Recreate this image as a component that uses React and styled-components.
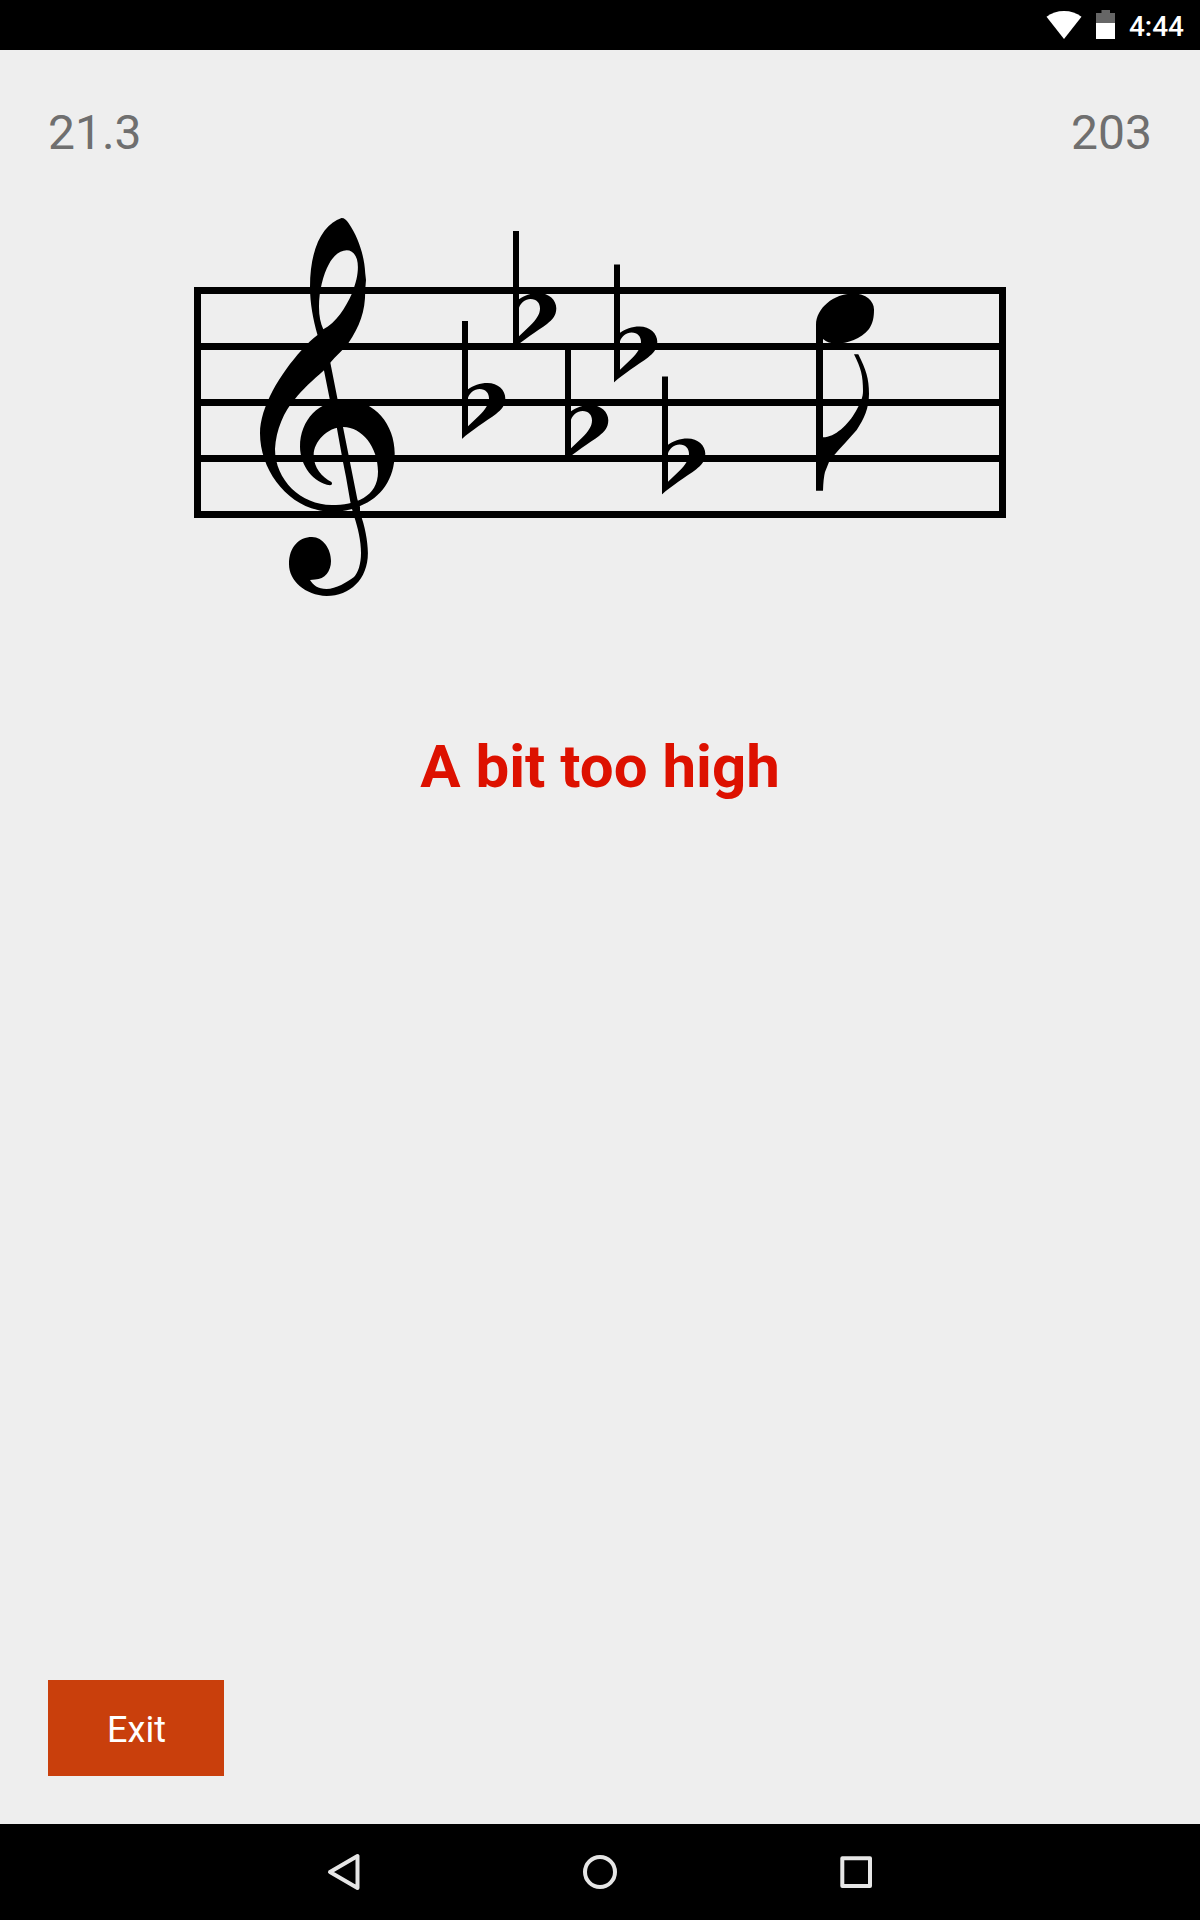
import React from 'react';
import styled, { createGlobalStyle } from 'styled-components';

const GlobalStyle = createGlobalStyle`
  body {
    margin: 0;
    background: #eeeeee;
  }
`

const Screen = styled.div`
  width: 1200px;
  height: 1920px;
  display: flex;
  flex-direction: column;
  background: #eeeeee;
  font-family: Roboto, sans-serif;
`

const StatusBar = styled.header`
  height: 50px;
  box-sizing: border-box;
  padding-right: 16px;
  display: flex;
  flex-shrink: 0;
  align-items: center;
  justify-content: flex-end;
  background: #000;
`

const StatusIcons = styled.svg`
  width: 70px;
  height: 50px;
  margin-right: 13px;
`

const Clock = styled.span`
  color: #fff;
  font-size: 28px;
  font-weight: 500;
  line-height: 32px;
  padding-top: 4px;
`

const Main = styled.main`
  flex: 1;
  display: flex;
  flex-direction: column;
  padding: 55px 48px 48px;
`

const Counters = styled.div`
  display: flex;
  justify-content: space-between;
  height: 56px;
`

const Counter = styled.span`
  color: #6f6f6f;
  font-size: 48px;
  line-height: 56px;
`

const Staff = styled.svg`
  width: 840px;
  height: 400px;
  margin: 49px 0 0 132px;
`

const Feedback = styled.p`
  margin: 122px 0 0;
  color: #dd1100;
  font-size: 60px;
  font-weight: 700;
  line-height: 70px;
  text-align: center;
`

const ExitButton = styled.button`
  width: 176px;
  height: 96px;
  margin-top: auto;
  padding: 4px 0 0 1px;
  border: none;
  background: #c93f0c;
  color: #fff;
  font-family: inherit;
  font-size: 36px;
`

const NavBar = styled.nav`
  height: 96px;
  display: flex;
  flex-shrink: 0;
  align-items: center;
  justify-content: center;
  gap: 208px;
  background: #000;
`

const NavIcon = styled.svg`
  width: 48px;
  height: 48px;
  fill: none;
  stroke: #e6e6e6;
  stroke-width: 4;
  stroke-linejoin: round;
`

const lines = [287, 343, 399, 455, 511];

const flats = [
  {x: 462, y: 321},
  {x: 513, y: 231},
  {x: 565, y: 343},
  {x: 614, y: 264.5},
  {x: 662, y: 376.5}
];

const Flat = ({x, y}) => (
  <g transform={`translate(${x} ${y})`}>
    <path d="M0 0H6V68.3C11 64.5 18 62 25.5 62C36 62 43.3 69 43.3 77.3C43.3 84.500 39.500 88.800 34 93C25 99.500 8 110.500 0.2 117.7H0ZM6 76.7V105.3L17 94.7C23.5 88.500 27 83 27 77.5C27 72 23.5 68 17.6 68C12 68 8 71.5 6 76.7Z" fillRule="evenodd" />
  </g>
)

const Clef = () => (
  <g>
    {/* upper loop running into the big left curve and the spiral */}
    <path
      fillRule="evenodd"
      d="M341.500 218C344.500 218 346.500 220 348.500 223C359.500 239 364.500 258 365.200 273L366 280L365.200 290C365.500 311 360 326 348.300 343.300C343 350 336 356 330 363L324 370.300C313 380 302 390 295 399C284 411 276 430 275 449C275 480 301 505 331.700 505C355 505 378 497 378 471.700C378 447 362 427 343.300 427C327 427 313.700 442 313.700 455C313.700 468 322 477 331.500 482Q333 485.300 330 485.300C314 483 300 466 300 446.700C300 420 319 400 346 400C375 400 394.700 425 394.700 453.300C394.700 479 381 498 360 506C350 511 340 511.500 329 511.500C290 510 260 472 260 433.300C260 407 280 374 301.700 350C307 344 312 339 317.500 335C313 319 310 303 310 287C310 246 324 224 341.500 218ZM346.700 250.300C340 250.300 333 256 329 264C323 275 319 291 319 307C319 316 320.500 323 323.300 329.300C336 323 346 307 351.700 294C356 283 357.900 275 357.900 267C357.900 256 353 250.300 346.700 250.300Z"
    />
    {/* stem and the curl under the staff */}
    <path d="M323.500 368L330 361L337.500 399L343 427L357.300 499L360 507L360 513C365 526 367.700 541 367.900 553C368 579 350 596 326.700 596C305 595 289 581 289 564C289 547 299 537 312 537C323 537 331 549 331 561C331 571 325 579.500 315 579.500L310 580C313 585 318 589 326.500 589C336 589 347 582 354 577C358 573 361 564 361 553C361 541 358 528 354 516L352 509L350.300 501.700L346 477L343 462L336.700 427L329.700 399Z" />
  </g>
)

const EighthNote = () => (
  <g>
    <path d="M816 325C816 308 834 293.500 853 293.500C866 293.500 874 301 874 309.500C874 317.500 873 323 869 329C861 339 847 343.500 837 343.500Q828 343.500 823 339V437.300C835 437.300 848 425 856 411C861 402 863 397 863 391C863 376 861 368 854 354.300H858.300C866 370 869 378 869 394C869 408 864 419 856.700 430C849 439 841 447 834.300 455L829 462L825 472Q823.400 478 823 490.700H816Z" />
  </g>
)

const App = () => {
  return (
    <Screen>
      <GlobalStyle />
      <StatusBar>
        <StatusIcons viewBox="1046 0 70 50" fill="#fff">
          <path d="M1046.500 16.800Q1054 11 1064 11Q1074 11 1081.500 16.800L1064 39Z" />
          <path d="M1101.500 10H1110V13H1115V23H1096V13H1101.500Z" fill="#666" />
          <path d="M1096 23H1115V39H1096Z" />
        </StatusIcons>
        <Clock>4:44</Clock>
      </StatusBar>
      <Main>
        <Counters>
          <Counter>21.3</Counter>
          <Counter>203</Counter>
        </Counters>
        <Staff viewBox="180 210 840 400">
          {lines.map((y) => (
            <rect x="194" y={y} width="812" height="7" key={y} />
          ))}
          <rect x="194" y="287" width="7" height="231" />
          <rect x="999" y="287" width="7" height="231" />
          <Clef />
          {flats.map(({x, y}) => (
            <Flat x={x} y={y} key={x} />
          ))}
          <EighthNote />
        </Staff>
        <Feedback>A bit too high</Feedback>
        <ExitButton>Exit</ExitButton>
      </Main>
      <NavBar>
        <NavIcon viewBox="0 0 48 48">
          <path d="M10 24L37.500 8V40Z" />
        </NavIcon>
        <NavIcon viewBox="0 0 48 48">
          <circle cx="24" cy="24" r="15" />
        </NavIcon>
        <NavIcon viewBox="0 0 48 48">
          <rect x="10.300" y="10.300" width="27.700" height="27.700" />
        </NavIcon>
      </NavBar>
    </Screen>
  )
}

export default App;
